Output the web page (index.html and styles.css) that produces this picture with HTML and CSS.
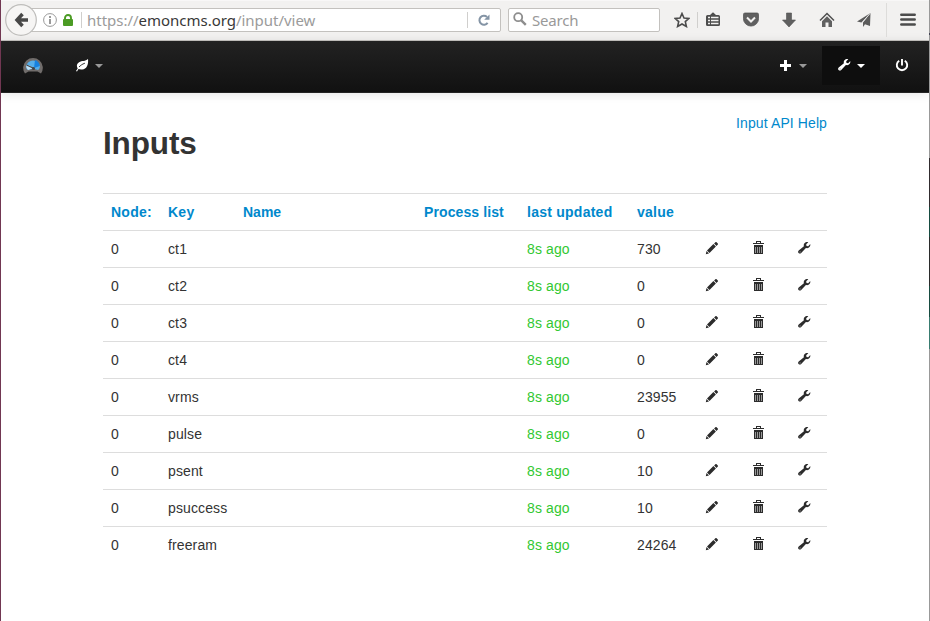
FILE: index.html
```
<!DOCTYPE html>
<html lang="en">
<head>
<meta charset="utf-8">
<title>Inputs</title>
<link rel="stylesheet" href="styles.css">
</head>
<body>
<svg class="defs" width="0" height="0" aria-hidden="true">
  <symbol id="pencil" viewBox="0 0 14 14"><path d="M.8 13.200l.7-3.200 2.500 2.500zM2 9.400l6.400-6.300 2.500 2.500-6.400 6.300zM9.100 2.500l1.300-1.300c.4-.4.9-.3 1.200 0l1.200 1.200c.4.400.3.900 0 1.200l-1.300 1.300z"/></symbol>
  <symbol id="trash" viewBox="0 0 14 14"><path d="M2 2h3V0h5v2h3v1H2zM6 2h3V1H6z" fill-rule="evenodd"/><path d="M3 4h9v9H3z"/><path d="M4.500 6v6M6.500 6v6M8.500 6v6M10.500 6v6" stroke="#999"/></symbol>
  <symbol id="wrench" viewBox="0 0 14 14"><path d="M11.300 1.200 9.200 3.300l.3 1.600 1.700.3 2.100-2.100c.4 2-.9 4.100-3.200 4.100-.7 0-1.200-.2-1.200-.2l-4.700 4.900c-.8.8-2 .8-2.600.1-.7-.7-.7-1.800.1-2.600L6.900 5.200C6.200 2.600 8.600.500 11.300 1.200z"/><circle cx="3.100" cy="10.900" r=".6" fill="#999"/></symbol>
</svg>
<header class="browser">
  <div class="address">
    <svg class="back" viewBox="0 0 32 32"><circle cx="16" cy="16" r="15.300" fill="#f6f5f4" stroke="#bebdbb" stroke-width="1.200"/><path d="M17.500 10l-5.500 6 5.500 6M12 16H23" fill="none" stroke="#484848" stroke-width="3.500"/></svg>
    <svg class="info" viewBox="0 0 14 14"><circle cx="7" cy="7" r="6.400" fill="none" stroke="#999"/><path d="M6 3h2v2H6zM6 6h2v5H6z" fill="#999"/></svg>
    <svg class="lock" viewBox="0 0 10 12"><path d="M2 6V4a3 3 0 0 1 6 0v2" fill="none" stroke="#4b9b24" stroke-width="1.900"/><rect y="5" width="10" height="7" rx="1" fill="#4b9b24"/></svg>
    <span class="line"></span>
    <span class="url">https://<b>emoncms.org</b>/input/view</span>
    <span class="line reload-line"></span>
    <svg class="reload" viewBox="0 0 12 12"><path d="M9.600 8.800A4.500 4.500 0 1 1 9 2.900" fill="none" stroke="#8494a5" stroke-width="2"/><path d="M11.500.500v5.300H6.200z" fill="#8494a5"/></svg>
  </div>
  <div class="search"><svg viewBox="0 0 14 14"><circle cx="5.200" cy="5.200" r="4" fill="none" stroke="#8d8d8d" stroke-width="1.800"/><path d="M8.300 8.300l4.500 4.500" stroke="#8d8d8d" stroke-width="2.400"/></svg><span>Search</span></div>
  <div class="tools">
    <svg class="star" viewBox="0 0 16 16"><path d="M8 1.500l2 4.500 5 .4-3.700 3.200 1.100 4.900L8 12l-4.400 2.500 1.100-4.900L1 6.400 6 6z" fill="none" stroke="#4b4b4b" stroke-width="1.600"/></svg>
    <span class="line"></span>
    <svg class="list" viewBox="0 0 16 16"><path d="M5 3l3-2.700L11 3h2.500Q15 3 15 4.500v8q0 1.500-1.500 1.500h-11Q1 14 1 12.500v-8Q1 3 2.500 3z" fill="#4d4d4d"/><path d="M3 5.500h2M6 5.500h7.500M3 8.500h2M6 8.500h7.500M3 11.500h2M6 11.500h7.500" stroke="#f2f1f0" stroke-width="1.500"/></svg>
    <svg class="pocket" viewBox="0 0 16 16"><path d="M2 1h12q1.600 0 1.600 1.500v4a7.600 7.600 0 0 1-15.200 0v-4Q.4 1 2 1z" fill="#606060" stroke="#4b4b4b" stroke-width=".7"/><path d="M4 5.500l4 4 4-4" fill="none" stroke="#f2f1f0" stroke-width="2"/></svg>
    <svg class="down" viewBox="0 0 16 16"><path d="M5.500 1h5v7h4L8 15 1.500 8h4z" fill="#606060" stroke="#505050" stroke-width=".6"/></svg>
    <svg class="home" viewBox="0 0 16 16"><path d="M1 8.500l7-7 7 7" fill="none" stroke="#505050" stroke-width="1.500"/><path d="M3 9.200l5-5 5 5V15H9.500v-4.500h-3V15H3z" fill="#606060"/></svg>
    <svg class="send" viewBox="0 0 16 16"><path d="M14.500 1L1 9.500l4.500 1zM14.500 1L7 10.500v4.500l2-2.800 5 1.800z" fill="#5c5c5c"/><path d="M14 1.500L6.200 10.500" stroke="#e4e4e4" stroke-width=".9"/></svg>
    <span class="line tall"></span>
    <svg class="menu" viewBox="0 0 16 14"><path d="M1.300 1.800h13.400M1.300 6.600h13.400M1.300 11.400h13.400" stroke="#4c4c4c" stroke-width="2.500" stroke-linecap="round"/></svg>
  </div>
</header>
<nav class="navbar">
  <svg class="logo" viewBox="0 0 20 18"><path d="M2 17.500a9.800 9.800 0 1 1 16 0l-3.500-2h-9z" fill="#716d6b"/><path d="M3 10.500a7.100 7.100 0 0 1 14 0q-.4 2.500-2 3.500L10 12.500 5 14q-1.800-1-2-3.500z" fill="#55aeea"/><path d="M3.200 9l3.300.500 4 2.500-5.500 2q-2-2-1.800-5z" fill="#c2e2f6"/><path d="M12 4q4 1 4.900 6L11 12z" fill="#1681df"/><path d="M3.500 9l7 3.300" stroke="#444" stroke-width="1.200"/><circle cx="10.500" cy="12.500" r="1.500" fill="#444"/><path d="M6.500 18q3.500-3.500 7 0z" fill="#181818"/></svg>
  <div class="nav-item leaf-item"><svg class="leaf" viewBox="0 0 14 14"><path d="M1 13l1.700-2.400C-.1 5.700 4.800 3 8.500 2.900c2 0 3-.8 4.500-1.900.5 4.500-.5 10-5.800 10.500-1.800.2-3-.2-3.700-.5L2 13.600z" fill="#fff"/><path d="M4 9C5.500 7.500 7 6.200 9.900 5.200" fill="none" stroke="#1b1b1b" stroke-width=".9"/></svg><i class="caret"></i></div>
  <div class="nav-right">
    <div class="nav-item"><svg viewBox="0 0 14 14"><path d="M5 2h3v4h4v3H8v4H5V9H1V6h4z" fill="#fff"/></svg><i class="caret"></i></div>
    <div class="nav-item active"><svg viewBox="0 0 14 14" fill="#fff"><use href="#wrench"/></svg><i class="caret"></i></div>
    <svg class="power" viewBox="0 0 14 14"><path d="M4.200 2.700a5.200 5.200 0 1 0 5.600 0M7 1v6.500" fill="none" stroke="#fff" stroke-width="1.900"/></svg>
  </div>
</nav>
<main>
  <div class="heading"><h2>Inputs</h2><a>Input API Help</a></div>
  <table>
    <colgroup><col class="c1"><col class="c2"><col class="c3"><col class="c4"><col class="c5"><col class="c6"><col class="c7"><col class="c8"><col class="c9"></colgroup>
    <tr><th>Node:</th><th>Key</th><th>Name</th><th>Process list</th><th>last updated</th><th>value</th><th></th><th></th><th></th></tr>
    <tr><td>0</td><td>ct1</td><td></td><td></td><td class="ago">8s ago</td><td>730</td><td><svg><use href="#pencil"/></svg></td><td><svg><use href="#trash"/></svg></td><td><svg><use href="#wrench"/></svg></td></tr>
    <tr><td>0</td><td>ct2</td><td></td><td></td><td class="ago">8s ago</td><td>0</td><td><svg><use href="#pencil"/></svg></td><td><svg><use href="#trash"/></svg></td><td><svg><use href="#wrench"/></svg></td></tr>
    <tr><td>0</td><td>ct3</td><td></td><td></td><td class="ago">8s ago</td><td>0</td><td><svg><use href="#pencil"/></svg></td><td><svg><use href="#trash"/></svg></td><td><svg><use href="#wrench"/></svg></td></tr>
    <tr><td>0</td><td>ct4</td><td></td><td></td><td class="ago">8s ago</td><td>0</td><td><svg><use href="#pencil"/></svg></td><td><svg><use href="#trash"/></svg></td><td><svg><use href="#wrench"/></svg></td></tr>
    <tr><td>0</td><td>vrms</td><td></td><td></td><td class="ago">8s ago</td><td>23955</td><td><svg><use href="#pencil"/></svg></td><td><svg><use href="#trash"/></svg></td><td><svg><use href="#wrench"/></svg></td></tr>
    <tr><td>0</td><td>pulse</td><td></td><td></td><td class="ago">8s ago</td><td>0</td><td><svg><use href="#pencil"/></svg></td><td><svg><use href="#trash"/></svg></td><td><svg><use href="#wrench"/></svg></td></tr>
    <tr><td>0</td><td>psent</td><td></td><td></td><td class="ago">8s ago</td><td>10</td><td><svg><use href="#pencil"/></svg></td><td><svg><use href="#trash"/></svg></td><td><svg><use href="#wrench"/></svg></td></tr>
    <tr><td>0</td><td>psuccess</td><td></td><td></td><td class="ago">8s ago</td><td>10</td><td><svg><use href="#pencil"/></svg></td><td><svg><use href="#trash"/></svg></td><td><svg><use href="#wrench"/></svg></td></tr>
    <tr><td>0</td><td>freeram</td><td></td><td></td><td class="ago">8s ago</td><td>24264</td><td><svg><use href="#pencil"/></svg></td><td><svg><use href="#trash"/></svg></td><td><svg><use href="#wrench"/></svg></td></tr>
  </table>
</main>
<div class="edge"></div>
</body>
</html>
```
FILE: styles.css
```
* { box-sizing: border-box; }
body {
  margin: 0;
  width: 930px;
  height: 621px;
  overflow: hidden;
  border-left: 1px solid #713752;
  padding-right: 1px;
  background: #fff;
  color: #333;
  font: 14px/20px "Liberation Sans", Arial, sans-serif;
}
svg { display: block; flex: none; }
.defs { position: absolute; }
.browser {
  display: flex;
  height: 41px;
  padding: 7px 0 0 4px;
  background: #f2f1f0;
  border-top: 1px solid #f8f7f7;
  border-bottom: 1px solid #c5c3c0;
  font-family: "Noto Sans", sans-serif;
  font-size: 15px;
}
.address, .search {
  display: flex;
  align-items: center;
  height: 24px;
  background: #fff;
  border: 1px solid #c3c1be;
  border-radius: 2px;
}
.address { width: 484px; margin-left: 12px; }
.back { width: 32px; height: 32px; margin-left: -13px; }
.info { width: 14px; height: 14px; margin-left: 6px; }
.lock { width: 10px; height: 12px; margin-left: 6px; }
.line { width: 1px; height: 16px; background: #d0cfcd; margin-left: 8px; flex: none; }
.url { width: 380px; margin-left: 5px; color: #9b9b9b; letter-spacing: -.02px; }
.url b { color: #383838; font-weight: 400; }
.reload-line { margin-left: 0; }
.reload { width: 12px; height: 12px; margin-left: 10px; }
.search { width: 152px; margin-left: 7px; padding-left: 4px; color: #999; }
.search svg { width: 14px; height: 14px; margin-top: -2px; }
.search span { margin-left: 5px; letter-spacing: -.2px; }
.tools { display: flex; align-items: center; height: 24px; }
.tools svg { width: 16px; height: 16px; }
.tools .star { margin-left: 14px; }
.tools .line { margin-left: 7px; }
.tools .list { margin-left: 7px; }
.tools .pocket { margin-left: 22px; }
.tools .down, .tools .home { margin-left: 22px; }
.tools .send { margin-left: 21px; }
.tools .line.tall { height: 34px; margin-left: 14px; background: #dddcda; }
.tools .menu { margin-left: 13px; height: 14px; }
.navbar {
  display: flex;
  height: 52px;
  padding: 0 20px 0 22px;
  background: linear-gradient(#222, #111);
  border-bottom: 1px solid #252525;
  box-shadow: 0 1px 10px rgba(0, 0, 0, .1);
}
.logo { width: 20px; height: 18px; margin-top: 15px; }
.nav-item { display: flex; width: 58px; height: 39px; margin-top: 5px; padding: 12px 0 0 15px; }
.nav-item svg { width: 14px; height: 14px; }
.leaf-item { margin-left: 17px; }
.caret {
  width: 0; height: 0;
  margin: 6px 0 0 6px;
  border: 4px solid transparent;
  border-top-color: #999;
  border-bottom: 0;
}
.nav-right { display: flex; margin-left: auto; }
.active { background: #0e0e0e; }
.active .caret { border-top-color: #fff; }
.power { width: 14px; height: 14px; margin: 17px 0 0 15px; }
main { width: 724px; margin: 20px 0 0 102px; }
.heading { display: flex; justify-content: space-between; height: 80px; }
.heading a { letter-spacing: .1px; }
h2 { margin: 10px 0 0; font-size: 31.5px; line-height: 40px; font-weight: bold; letter-spacing: -.15px; }
.heading a, th { color: #08c; }
table { width: 724px; table-layout: fixed; border-collapse: separate; border-spacing: 0; }
th, td { height: 37px; padding: 8px; border-top: 1px solid #ddd; text-align: left; vertical-align: top; }
th { letter-spacing: .25px; white-space: nowrap; }
th:nth-child(3) { letter-spacing: 0; }
th:nth-child(4) { letter-spacing: .1px; }
td { letter-spacing: .12px; }
.c1 { width: 57px; }
.c2 { width: 75px; }
.c3 { width: 181px; }
.c4 { width: 103px; }
.c5 { width: 110px; }
.c6 { width: 68px; }
.c7 { width: 46px; }
.c8 { width: 46px; }
.c9 { width: 38px; }
td.ago { color: #32c832; }
td svg { width: 14px; height: 14px; margin-top: 2px; fill: #2c2c2c; }
.edge {
  position: absolute;
  left: 929px;
  top: 0;
  width: 1px;
  height: 621px;
  background: linear-gradient(#999 0 33px, #445 33px 35px, #999 35px 158px, #302b2e 158px 207px, #164b40 207px 237px, #2a2b2b 237px 286px, #174b40 286px 317px, #397c70 317px 349px, #999 349px);
}
```
